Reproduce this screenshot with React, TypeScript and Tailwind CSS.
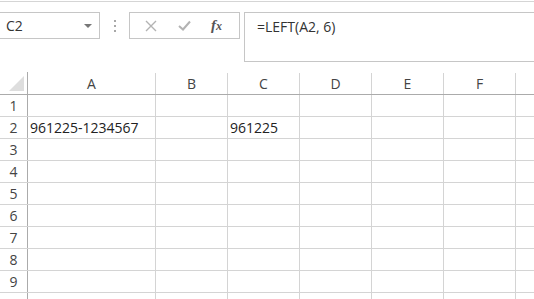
import { Fragment } from 'react'

const COLS = [
  { key: 'A', width: 'w-[128px]' },
  { key: 'B', width: 'w-[72px]' },
  { key: 'C', width: 'w-[72px]' },
  { key: 'D', width: 'w-[72px]' },
  { key: 'E', width: 'w-[72px]' },
  { key: 'F', width: 'w-[72px]' },
  { key: 'G', width: 'w-[72px]' },
]

const ROWS = [1, 2, 3, 4, 5, 6, 7, 8, 9, 10]

// só a linha 2 tem conteúdo
const CELLS: Record<string, string> = {
  A2: '961225-1234567',
  C2: '961225',
}

export default function App() {
  return (
    <div className="w-[534px] h-[299px] overflow-hidden bg-white font-['Open_Sans',sans-serif] text-[14px] text-[#222]">
      <div className="mt-px border-t border-[#d5d5d5]" />

      {/* barra de fórmulas */}
      <div className="flex items-start pt-[10px] h-[70px]">
        <div className="w-[100px] h-[27px] border-y border-r border-[#c6c6c6] flex items-center pl-[6px] pr-[7px]">
          <span className="flex-1 text-[#333]">C2</span>
          <span className="w-0 h-0 border-x-[4px] border-x-transparent border-t-[4px] border-t-[#777]" />
        </div>
        <div className="w-[29px] h-[27px] flex flex-col items-center justify-center gap-[3px]">
          <span className="w-[2px] h-[2px] bg-[#a8a8a8]" />
          <span className="w-[2px] h-[2px] bg-[#a8a8a8]" />
          <span className="w-[2px] h-[2px] bg-[#a8a8a8]" />
        </div>
        <div className="w-[111px] h-[27px] border border-[#c6c6c6] flex items-center">
          <svg width="12" height="12" viewBox="0 0 12 12" className="ml-[15px]">
            <path d="M1 1 L11 11 M11 1 L1 11" stroke="#b3b3b3" strokeWidth="1.4" />
          </svg>
          <svg width="13" height="11" viewBox="0 0 13 11" className="ml-[21px]">
            <path d="M1 6 L5 9.5 L12 1.5" stroke="#b3b3b3" strokeWidth="2" fill="none" />
          </svg>
          <span className="ml-[20px] font-['Liberation_Serif',serif] italic font-bold text-[15px] text-[#555] leading-none">
            f<span className="text-[12px]">x</span>
          </span>
        </div>
        <div className="ml-[4px] flex-1 h-[50px] border-y border-l border-[#c6c6c6] pl-[12px] pt-[3px] text-[#333]">
          =LEFT(A2, 6)
        </div>
      </div>

      {/* planilha */}
      <div className="flex h-[23px] border-b border-[#ababab] text-[#444]">
        <div className="w-[28px] shrink-0 border-r border-[#ababab] relative">
          <span className="absolute right-[3px] bottom-[3px] w-0 h-0 border-l-[15px] border-l-transparent border-b-[15px] border-b-[#dedede]" />
        </div>
        {COLS.map((c) => (
          <div key={c.key} className={`${c.width} shrink-0 border-r border-[#d4d4d4] flex items-center justify-center mt-px`}>
            {c.key === 'G' ? '' : c.key}
          </div>
        ))}
      </div>

      {ROWS.map((r) => (
        <div key={r} className="flex h-[22px] border-b border-[#d4d4d4]">
          <div className="w-[28px] shrink-0 border-r border-[#ababab] flex items-center justify-center text-[#444]">
            {r}
          </div>
          {COLS.map((c) => (
            <Fragment key={c.key}>
              <div className={`${c.width} shrink-0 border-r border-[#d4d4d4] flex items-center pl-[2px] whitespace-nowrap`}>
                {CELLS[`${c.key}${r}`] ?? ''}
              </div>
            </Fragment>
          ))}
        </div>
      ))}
    </div>
  )
}
